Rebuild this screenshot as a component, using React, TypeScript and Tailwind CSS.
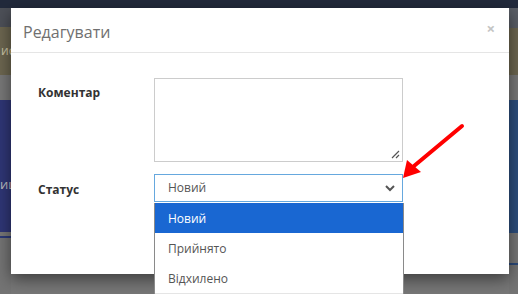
import React from "react";

export default function App() {
  const font = { fontFamily: '"Open Sans", "Noto Sans", sans-serif' };
  return (
    <div className="relative w-[518px] h-[294px] overflow-hidden bg-[#777777]" style={font}>
      {/* background page */}
      <div className="flex flex-col h-full">
        <div className="h-[8px] bg-[#222a3c] shrink-0" />
        <div className="flex flex-1">
          <div className="w-[11px] flex flex-col overflow-hidden">
            <div className="h-[19px] bg-[#4d5058]" />
            <div className="h-[48px] bg-[#6c6650] flex items-center text-[12px] text-[#cfc8a8] whitespace-nowrap pl-[1px]">ис</div>
            <div className="h-[25px] bg-[#787878]" />
            <div className="h-[132px] bg-[#2f3676] flex items-end pb-[38px] text-[13px] text-[#bfbfbf] whitespace-nowrap">иц</div>
            <div className="h-[4px] bg-[#777]" />
            <div className="h-[2px] bg-[#2c3a78]" />
            <div className="flex-1 bg-[#747474]" />
          </div>
          <div className="flex-1" />
          <div className="w-[9px] flex flex-col">
            <div className="h-[20px] bg-[#5a5e66]" />
            <div className="h-[47px] bg-[#6c6650]" />
            <div className="h-[25px] bg-[#787878]" />
            <div className="h-[133px] bg-[#2d4e7d]" />
            <div className="h-[30px] bg-[#777]" />
            <div className="h-[2px] bg-[#2c4a7a]" />
            <div className="flex-1 bg-[#747474]" />
          </div>
        </div>
      </div>

      {/* modal */}
      <div className="absolute left-[11px] top-[8px] w-[498px] h-[266px] bg-white shadow-[0_5px_15px_rgba(0,0,0,0.5)] flex flex-col">
        <div className="h-[45px] border-b border-[#e5e5e5] flex items-center justify-between pl-[12px] pr-[14px]">
          <span className="text-[16px] text-[#707070] mt-[4px]">Редагувати</span>
          <span className="text-[15px] font-bold text-[#c4c4c4] leading-none -mt-[4px]">×</span>
        </div>
        <div className="flex flex-col pt-[25px] pl-[27px]">
          <div className="flex">
            <div className="w-[116px] pt-[6px] text-[12px] font-bold text-[#333]">Коментар</div>
            <div className="relative w-[249px] h-[84px] border border-[#cccccc] bg-white">
              <svg className="absolute right-[2px] bottom-[2px]" width="10" height="10" viewBox="0 0 10 10">
                <path d="M2 9 L9 2 M6 9 L9 6" stroke="#555" strokeWidth="1.2" fill="none" />
              </svg>
            </div>
          </div>
          <div className="flex mt-[12px]">
            <div className="w-[116px] pt-[7px] text-[12px] font-bold text-[#333]">Статус</div>
            <div className="relative w-[249px] h-[28px] border border-[#66a8de] bg-white flex items-center pl-[13px] pr-[6px] justify-between">
              <span className="text-[12px] text-[#555]">Новий</span>
              <svg width="12" height="8" viewBox="0 0 12 8">
                <path d="M2 2 L6 6 L10 2" stroke="#555" strokeWidth="2" fill="none" />
              </svg>
            </div>
          </div>
        </div>
      </div>

      {/* dropdown list */}
      <div className="absolute left-[154px] top-[203px] w-[250px] h-[100px] bg-white border-l border-r border-[#8a8a8a] flex flex-col text-[12px]">
        <div className="h-[30px] bg-[#1967d2] text-white flex items-center pl-[13px] pt-[2px]">Новий</div>
        <div className="h-[30px] text-[#555] flex items-center pl-[13px] pt-[2px]">Прийнято</div>
        <div className="h-[30px] text-[#555] flex items-center pl-[13px] pt-[2px]">Відхилено</div>
        <div className="h-[2px] bg-[#e5e5e5]" />
      </div>

      {/* red arrow */}
      <svg className="absolute left-0 top-0" width="518" height="294" viewBox="0 0 518 294">
        <line x1="462" y1="126" x2="414" y2="166" stroke="#f00" strokeWidth="4" strokeLinecap="round" />
        <polygon points="403,178 407,160 421,172" fill="#f00" />
      </svg>
    </div>
  );
}
